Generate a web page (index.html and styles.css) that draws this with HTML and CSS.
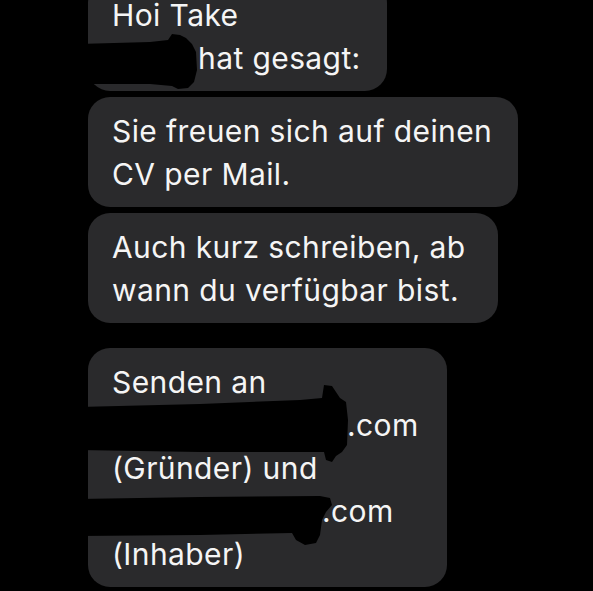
FILE: index.html
```html
<!DOCTYPE html>
<html lang="de">
<head>
<meta charset="utf-8">
<link rel="stylesheet" href="styles.css">
</head>
<body>
<main class="thread">
  <div class="bubble b1">
    Hoi Take<br><span class="gap g1"></span>hat gesagt:
    <svg class="redact" width="120" height="120" viewBox="0 0 120 120"><polygon points="-10,63 62,61 80,59 84,53 92,54 98,57 104,63 108,71 109,89 106,101 100,107 90,108 84,105 62,103 -10,103"/></svg>
  </div>
  <div class="bubble b2">Sie freuen sich auf deinen<br>CV per Mail.</div>
  <div class="bubble b3">Auch kurz schreiben, ab<br>wann du verfügbar bist.</div>
  <div class="bubble b4 spaced">
    Senden an<br><span class="gap g2"></span>.com<br>(Gründer) und<br><span class="gap g3"></span>.com<br>(Inhaber)
    <svg class="redact" width="270" height="240" viewBox="0 0 270 240"><polygon points="-10,59 112,56 212,52 234,50 236,37 244,38 248,44 252,50 258,54 260,72 259,97 254,104 248,108 244,114 238,112 236,104 112,104 -10,102"/><polygon points="-10,151 112,149 232,148 242,150 244,157 238,164 234,172 232,187 228,195 217,197 208,192 204,185 112,187 -10,188"/></svg>
  </div>
</main>
</body>
</html>
```
FILE: styles.css
```css
html, body {
  margin: 0;
  padding: 0;
  background: #000;
  height: 100%;
  overflow: hidden;
}
.thread {
  display: flex;
  flex-direction: column;
  align-items: flex-start;
  gap: 6px;
  padding-left: 88px;
  margin-top: -19px;
  font-family: Inter, "Liberation Sans", Arial, sans-serif;
  font-size: 30px;
  letter-spacing: 0.4px;
  line-height: 43px;
  color: #f5f5f5;
}
.bubble {
  position: relative;
  box-sizing: border-box;
  background: #2a2a2c;
  border-radius: 22px;
  padding: 13px 24px 11px;
  white-space: nowrap;
}
.b1 { width: 299px; }
.b2 { width: 430px; }
.b3 { width: 410px; }
.b4 { width: 359px; }
.spaced { margin-top: 19px; }
.gap { display: inline-block; }
.g1 { width: 86px; }
.g2 { width: 235px; }
.g3 { width: 210px; }
.redact {
  position: absolute;
  left: 0;
  top: 0;
  overflow: visible;
  fill: #000;
}
```
